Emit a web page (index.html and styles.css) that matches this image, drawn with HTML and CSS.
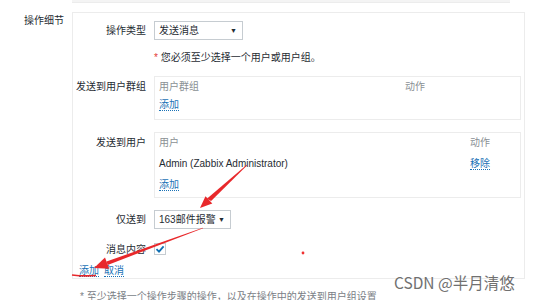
FILE: index.html
```html
<!DOCTYPE html>
<html lang="zh">
<head>
<meta charset="utf-8">
<link rel="stylesheet" href="styles.css">
</head>
<body>
<div class="top-strip"></div>
<div class="section">
  <div class="section-label">操作细节</div>
  <div class="box">
    <div class="form">
      <div class="lbl lbl-mid">操作类型</div>
      <div class="field"><div class="select s1"><span>发送消息</span><span class="caret">▼</span></div></div>

      <div class="lbl"></div>
      <div class="field err"><span class="star">*</span> 您必须至少选择一个用户或用户组。</div>

      <div class="lbl lbl-top">发送到用户群组</div>
      <div class="field">
        <div class="tbl t1">
          <div class="trow head"><span class="c1">用户群组</span><span class="c2">动作</span></div>
          <div class="trow"><a class="link">添加</a></div>
        </div>
      </div>

      <div class="lbl lbl-top">发送到用户</div>
      <div class="field">
        <div class="tbl t2">
          <div class="trow head"><span class="c1">用户</span><span class="c2">动作</span></div>
          <div class="trow"><span class="c1">Admin (Zabbix Administrator)</span><a class="link c2">移除</a></div>
          <div class="trow"><a class="link">添加</a></div>
        </div>
      </div>

      <div class="lbl lbl-mid">仅送到</div>
      <div class="field"><div class="select s2"><span>163邮件报警</span><span class="caret">▼</span></div></div>

      <div class="lbl lbl-mid shift">消息内容</div>
      <div class="field shift">
        <span class="check"><svg width="10" height="10" viewBox="0 0 10 10"><path d="M1.5 5.2 L4 7.6 L8.6 2.4" fill="none" stroke="#0f6fb3" stroke-width="1.8"/></svg></span>
      </div>
    </div>
    <div class="actions"><a class="link">添加</a><a class="link">取消</a></div>
  </div>
</div>
<div class="below">* 至少选择一个操作步骤的操作，以及在操作中的发送到用户组设置</div>

<svg class="overlay" width="553" height="300" viewBox="0 0 553 300">
  <polygon points="247.2,165.2 246.8,164.8 206.9,198.8 211.1,201.0" fill="#e8282b"/>
  <polygon points="200,208 205.5,196.2 212.3,203.6" fill="#e8282b"/>
  <polygon points="203.1,228.3 202.9,227.7 106.5,261.5 107.7,264.9" fill="#e8282b"/>
  <polygon points="94,268 105,257.6 109.2,268.8" fill="#e8282b"/>
  <path d="M72 275 Q84 276.5 96 275.5" fill="none" stroke="#e8282b" stroke-width="1.6"/>
  <circle cx="303" cy="253" r="1.4" fill="#f03030"/>
</svg>
<div class="watermark">CSDN @半月清悠</div>
</body>
</html>
```
FILE: styles.css
```css
* { box-sizing: border-box; }
html, body { margin: 0; padding: 0; }
body {
  width: 553px;
  height: 300px;
  overflow: hidden;
  background: #fff;
  font-family: "Liberation Sans", "Noto Sans CJK SC", sans-serif;
  font-size: 10px;
  line-height: 12px;
  color: #1f2c33;
  position: relative;
}
.top-strip {
  margin-left: 72px;
  width: 438px;
  height: 3px;
  background: #f4f4f4;
  border-bottom: 1px solid #ececec;
}
.section {
  display: grid;
  grid-template-columns: 64px 453px;
  column-gap: 8px;
  margin-top: 9px;
}
.section-label {
  text-align: right;
  padding-top: 3px;
  color: #1f2c33;
}
.box {
  border: 1px solid #ececec;
  height: 267px;
  padding: 8px 3px 0 0;
}
.form {
  display: grid;
  grid-template-columns: 73px 367px;
  column-gap: 8px;
  row-gap: 12px;
}
.lbl { text-align: right; }
.lbl-mid { align-self: center; }
.lbl-top { padding-top: 5px; }
.shift { margin-top: 2px; }
.select {
  height: 19px;
  border: 1px solid #c6ccd1;
  display: flex;
  align-items: center;
  justify-content: space-between;
  padding: 0 5px 0 4px;
  background: #fff;
}
.s1 { width: 89px; }
.s2 { width: 77px; }
.caret { font-size: 7px; color: #1f2c33; }
.star { color: #e33734; }
.tbl {
  border: 1px solid #ececec;
  padding: 4px 5px 0 4px;
}
.t1 { height: 44px; }
.t2 { height: 66px; }
.trow {
  display: flex;
  height: 12px;
  margin-bottom: 6px;
}
.t2 .trow { margin-bottom: 9px; }
.head { color: #8a9094; }
.trow .c1 { width: 246px; }
.t2 .trow .c1 { width: 311px; }
.link {
  color: #1a72b6;
  border-bottom: 1px dotted #1a72b6;
  height: 12px;
  line-height: 11px;
}
.check {
  display: inline-flex;
  width: 12px;
  height: 12px;
  border: 1px solid #c6ccd1;
  align-items: center;
  justify-content: center;
}
.actions {
  display: flex;
  gap: 5px;
  padding-left: 6px;
  margin-top: 8px;
}
.below {
  margin-left: 80px;
  margin-top: 12px;
  color: #7a8086;
  font-size: 10px;
}
.overlay {
  position: absolute;
  left: 0;
  top: 0;
  pointer-events: none;
}
.watermark {
  position: absolute;
  left: 394px;
  top: 272px;
  font-family: "Noto Sans CJK SC", sans-serif;
  font-size: 15.5px;
  line-height: 20px;
  color: #707070;
  text-shadow: 0 0 1px #fff;
}
```
